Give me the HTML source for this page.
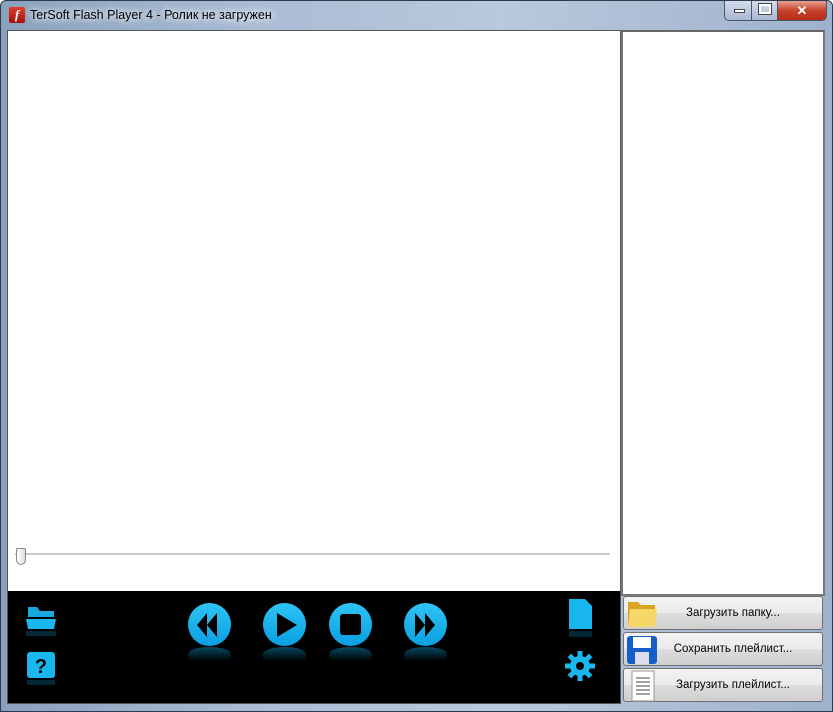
<!DOCTYPE html>
<html><head><meta charset="utf-8"><style>
*{margin:0;padding:0;box-sizing:border-box}
body{width:833px;height:712px;overflow:hidden;font-family:"Liberation Sans","DejaVu Sans",sans-serif;background:#fff}
.win{position:absolute;left:0;top:0;width:833px;height:712px;border:1px solid #2f3b4d;border-radius:6px 6px 0 0;background:linear-gradient(90deg,#8aa1bd 0%,#a9bcd4 30%,#b9c9dc 60%,#9db2cc 100%)}
.title{position:absolute;left:29px;top:7px;font-size:12.5px;color:#000;text-shadow:0 0 8px #fff,0 0 8px #fff}
.fl{position:absolute;left:8px;top:6px;width:16px;height:16px;background:linear-gradient(#e23b2a,#a5120c);border-radius:2px;color:#fff;font:italic bold 13px "Liberation Serif",serif;text-align:center;line-height:16px}
.btns{position:absolute;left:723px;top:0;width:103px;height:20px;border:1px solid #4a5668;border-top:none;border-radius:0 0 5px 5px;overflow:hidden;display:flex}
.btns div{height:19px}
.b1{width:27px;background:linear-gradient(#d3dced,#a9b8cf);border-right:1px solid #4a5668}
.b2{width:26px;background:linear-gradient(#d3dced,#a9b8cf);border-right:1px solid #4a5668}
.b3{flex:1;background:linear-gradient(#e8a193,#c7432d 50%,#b52c16);color:#fff;font:bold 13px sans-serif;text-align:center;line-height:19px}
.video{position:absolute;left:7px;top:30px;width:614px;height:561px;background:#fff;border:1px solid #555;border-bottom:none}
.ctrl{position:absolute;left:7px;top:591px;width:614px;height:113px;background:#000;border:1px solid #555;border-top:none}
.track{position:absolute;left:15px;top:553px;width:595px;height:2px;background:#c9c9c9}
.thumb{position:absolute;left:16px;top:548px;width:10px;height:17px;background:linear-gradient(90deg,#fff,#ddd);border:1px solid #888;border-radius:2px 2px 5px 5px}
.list{position:absolute;left:621px;top:30px;width:204px;height:566px;background:#fff;border:2px solid #777;border-top-color:#666}
.pb{position:absolute;left:623px;width:200px;height:34px;border:1px solid #707070;border-radius:3px;background:linear-gradient(#f2f2f2 0%,#ebebeb 50%,#dddddd 51%,#cfcfcf 100%);font-size:11.5px;color:#000;text-align:center;line-height:32px;padding-left:20px}
.c{position:absolute;width:43px;height:43px;border-radius:50%;background:linear-gradient(#2ec4f5,#0a9fe0)}
.r{position:absolute;width:43px;height:14px;border-radius:50% 50% 0 0;background:linear-gradient(#0a6a90,#000);opacity:.7}
</style></head><body>
<div class="win">
<div class="fl">f</div>
<div class="title">TerSoft Flash Player 4 - Ролик не загружен</div>
<div class="btns"><div class="b1"></div><div class="b2"></div><div class="b3">✕</div></div>
</div>
<div style="position:absolute;left:734px;top:9px;width:11px;height:4px;background:#fff;border:1px solid #445"></div>
<div style="position:absolute;left:759px;top:4px;width:12px;height:10px;border:2px solid #fff;outline:1px solid #445"></div>
<div class="video"></div>
<div class="track"></div><div class="thumb"></div>
<div class="ctrl"></div>
<svg style="position:absolute;left:0;top:591px" width="621" height="113">
<path d="M28 16h9l3 4h14v6H28z" fill="#18a8e0"/>
<path d="M26 28h30l-2 10H28z" fill="#1ab6ee"/>
<rect x="26" y="40" width="30" height="5" fill="#08435a" opacity=".6"/>
<rect x="27" y="61" width="28" height="26" rx="3" fill="#1ab6ee"/>
<text x="41" y="82" font-size="20" font-weight="bold" text-anchor="middle" fill="#000" font-family="Liberation Sans">?</text>
<rect x="27" y="89" width="28" height="5" fill="#08435a" opacity=".6"/>
<path d="M569 8h16l7 7v23h-23z" fill="#1ab6ee"/>
<rect x="569" y="40" width="23" height="6" fill="#08435a" opacity=".6"/>
<g transform="translate(580,75)" fill="#1ab6ee">
<circle r="10"/>
<rect x="-2.5" y="-15" width="5" height="30"/>
<rect x="-2.5" y="-15" width="5" height="30" transform="rotate(45)"/>
<rect x="-2.5" y="-15" width="5" height="30" transform="rotate(90)"/>
<rect x="-2.5" y="-15" width="5" height="30" transform="rotate(135)"/>
<circle r="4" fill="#000"/>
</g>
</svg>
<div class="c" style="left:188px;top:603px"></div><div class="r" style="left:188px;top:647px"></div>
<div class="c" style="left:263px;top:603px"></div><div class="r" style="left:263px;top:647px"></div>
<div class="c" style="left:329px;top:603px"></div><div class="r" style="left:329px;top:647px"></div>
<div class="c" style="left:404px;top:603px"></div><div class="r" style="left:404px;top:647px"></div>
<svg style="position:absolute;left:0;top:0" width="621" height="712">
<path d="M207 613l-10 12 10 12z M217 613l-10 12 10 12z" fill="#000"/>
<path d="M277 613v24l20-12z" fill="#000"/>
<rect x="340" y="614" width="21" height="21" rx="3" fill="#000"/>
<path d="M415 613v24l10-12z M425 613v24l10-12z" fill="#000"/>
</svg>
<div class="list"></div>
<div class="pb" style="top:596px">Загрузить папку...</div>
<div class="pb" style="top:632px">Сохранить плейлист...</div>
<div class="pb" style="top:668px">Загрузить плейлист...</div>
<svg style="position:absolute;left:626px;top:598px" width="34" height="106">
<path d="M2 4h10l3 3h14v22H2z" fill="#d9a520"/>
<path d="M4 11h27l-2 18H2z" fill="#f7d76a"/>
<rect x="1" y="38" width="30" height="28" rx="3" fill="#1560c8"/>
<rect x="7" y="39" width="18" height="11" fill="#fff"/>
<rect x="9" y="54" width="14" height="12" fill="#dde"/>
<rect x="6" y="73" width="22" height="30" fill="#fff" stroke="#999"/>
<path d="M10 80h14M10 84h14M10 88h14M10 92h14M10 96h14" stroke="#444"/>
</svg>
</body></html>
